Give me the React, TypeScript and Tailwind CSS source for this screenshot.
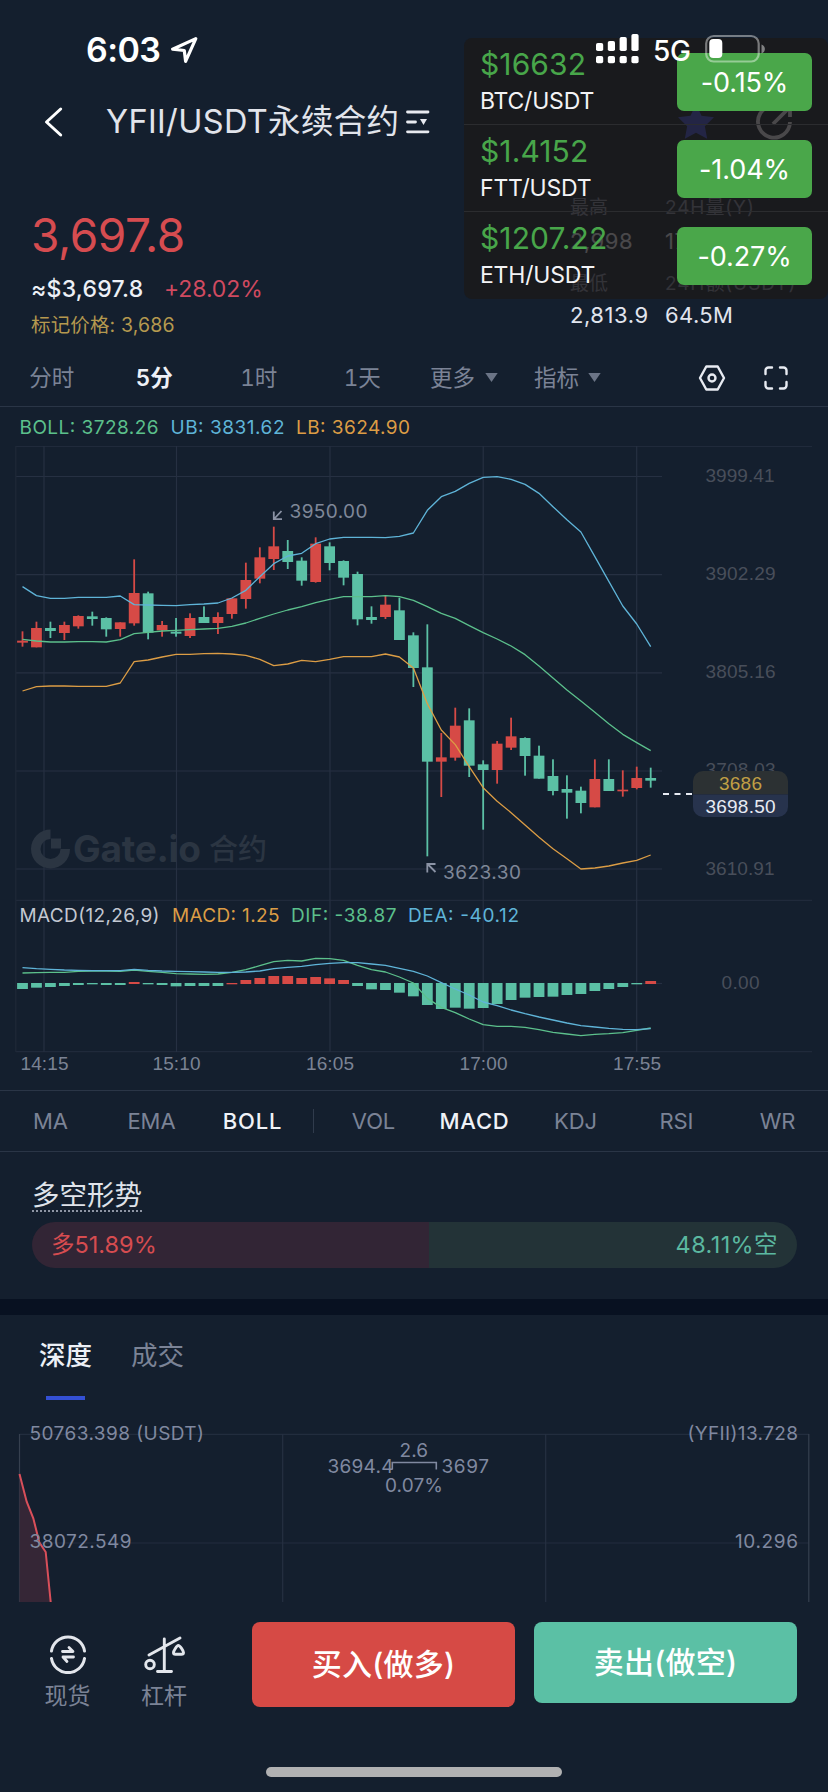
import React from "react";

type Dir = "r" | "g";
type Candle = [Dir, number, number, number, number];

const RED = "#d64a46";
const GREEN = "#5bc0a5";
const BLUE_LINE = "#5fb4d8";
const GREEN_LINE = "#5cc08c";
const ORANGE_LINE = "#dc9d45";
const GRID = "#263042";

const SANS = "Inter, 'Noto Sans CJK SC', sans-serif";
const AXIS = "'Liberation Sans', sans-serif";

// direction, high, body top, body bottom, low (one unit is a third of a pixel)
const candles: Candle[] = [
  ["r", 574, 602, 608, 620], ["r", 545, 564, 622, 622], ["g", 545, 564, 573, 594],
  ["r", 545, 555, 579, 600], ["r", 526, 528, 559, 566], ["g", 515, 529, 537, 557],
  ["g", 532, 534, 568, 590], ["r", 547, 547, 567, 590], ["r", 358, 459, 550, 557],
  ["g", 455, 460, 578, 598], ["r", 543, 555, 571, 590], ["g", 534, 575, 581, 590],
  ["r", 520, 534, 588, 594], ["g", 499, 531, 549, 549], ["r", 517, 531, 549, 582],
  ["r", 475, 475, 522, 536], ["r", 368, 420, 477, 506], ["r", 322, 352, 416, 430],
  ["r", 260, 319, 357, 390], ["g", 300, 333, 366, 387], ["g", 352, 362, 422, 437],
  ["r", 292, 311, 426, 428], ["g", 307, 319, 369, 391], ["g", 361, 363, 413, 436],
  ["g", 395, 402, 538, 556], ["g", 499, 531, 540, 551], ["r", 468, 494, 531, 537],
  ["g", 473, 511, 600, 600], ["g", 577, 586, 684, 741], ["g", 553, 682, 965, 1249],
  ["r", 879, 952, 965, 1071], ["r", 803, 857, 953, 962], ["g", 805, 841, 977, 1011],
  ["g", 961, 973, 990, 1169], ["r", 903, 911, 990, 1031], ["r", 833, 889, 923, 930],
  ["g", 892, 894, 948, 1007], ["g", 917, 947, 1016, 1016], ["g", 958, 1008, 1053, 1066],
  ["g", 1006, 1047, 1058, 1136], ["g", 1040, 1052, 1089, 1120], ["r", 958, 1017, 1102, 1102],
  ["g", 958, 1017, 1053, 1053], ["r", 991, 1049, 1054, 1070], ["r", 980, 1014, 1044, 1048],
  ["g", 983, 1014, 1022, 1043],
];

const upper = [440, 467, 475, 475, 472, 472, 472, 468, 494, 495, 496, 497, 494, 492, 489, 474, 451, 410, 371, 348, 340, 311, 297, 292, 292, 292, 293, 289, 279, 211, 170, 154, 130, 112, 110, 118, 133, 160, 200, 239, 276, 350, 424, 498, 552, 620];
const middle = [598, 603, 606, 606, 605, 605, 606, 599, 581, 577, 573, 571, 569, 567, 565, 559, 549, 535, 522, 510, 500, 488, 478, 470, 470, 470, 467, 470, 481, 500, 520, 535, 557, 578, 597, 618, 644, 678, 714, 750, 783, 817, 851, 883, 908, 932];
const lower = [753, 740, 738, 738, 739, 739, 739, 729, 665, 660, 651, 643, 643, 641, 640, 642, 646, 658, 677, 672, 661, 665, 658, 650, 650, 650, 642, 651, 684, 791, 870, 914, 980, 1043, 1084, 1118, 1155, 1192, 1226, 1256, 1287, 1284, 1278, 1269, 1261, 1245];

// MACD histogram: values under 280 rise above the zero line
const hist = [297, 293, 291, 288, 285, 283, 285, 285, 276, 283, 285, 289, 288, 288, 288, 279, 270, 264, 258, 258, 264, 261, 265, 270, 288, 298, 300, 308, 319, 345, 357, 353, 356, 354, 342, 330, 323, 321, 320, 315, 312, 303, 297, 291, 283, 273];
const dif = [249, 248, 247, 247, 244, 243, 243, 244, 240, 244, 247, 251, 252, 253, 252, 247, 239, 227, 215, 211, 213, 205, 206, 211, 226, 239, 246, 261, 279, 325, 352, 368, 387, 404, 409, 409, 412, 419, 427, 432, 437, 433, 431, 428, 421, 414];
const dea = [233, 236, 238, 240, 241, 242, 242, 242, 238, 241, 243, 244, 245, 246, 247, 247, 246, 243, 236, 232, 229, 224, 220, 218, 218, 222, 226, 235, 244, 258, 278, 297, 315, 336, 347, 360, 371, 381, 390, 399, 407, 411, 415, 418, 419, 416];

const cx = (i: number) => 22.5 + i * 13.96;
const priceY = (v: number) => 440 + v / 3;
const macdY = (v: number) => 890 + v / 3;
const line = (vals: number[], y: (v: number) => number) =>
  vals.map((v, i) => `${cx(i).toFixed(2)},${y(v).toFixed(2)}`).join(" ");

function Label({
  x, y, w, fill, size = 19, font = SANS, weight = 400, children,
}: {
  x: number; y: number; w: number; fill: string; size?: number; font?: string; weight?: number; children: string;
}) {
  return (
    <text x={x} y={y} textLength={w} fill={fill} fontSize={size} fontFamily={font} fontWeight={weight}>
      {children}
    </text>
  );
}

function PriceChart() {
  return (
    <svg className="block h-[683px] w-full shrink-0" viewBox="0 407 828 683">
      <g stroke={GRID} strokeWidth="1.2">
        <path d="M16 446.5H812M16 900.3H812M16 1051.7H812" stroke="#202a3b" />
        <path d="M16 476.5H662M16 574.7H662M16 672.8H662M16 771H662M16 869H662" />
        <path d="M15.8 446V1052" stroke="#1e2838" />
        <path d="M44 446V1052M176.5 446V1052M330 446V1052M483.2 446V1052M636.7 446V1052" />
        <path d="M640 983.5H662" />
      </g>

      <g fill="#2b3542">
        <path d="M50.5 829.5A19.5 19.5 0 1 0 70 849H60.5A10 10 0 1 1 50.5 839Z" />
        <path d="M51 838.5H61V848.5H51Z" />
        <Label x={73} y={861.7} w={128} fill="#2b3542" size={37} weight={650}>Gate.io</Label>
        <Label x={209} y={859.5} w={58} fill="#2b3542" size={29} weight={500}>合约</Label>
      </g>

      <Label x={19.5} y={433.5} w={139} fill={GREEN_LINE}>BOLL: 3728.26</Label>
      <Label x={170.5} y={433.5} w={114} fill={BLUE_LINE}>UB: 3831.62</Label>
      <Label x={296} y={433.5} w={114} fill={ORANGE_LINE}>LB: 3624.90</Label>

      {candles.map(([d, hi, top, bottom, lo], i) => (
        <g key={i} fill={d === "r" ? RED : GREEN}>
          <rect x={cx(i) - 0.9} y={priceY(hi)} width="1.8" height={(lo - hi) / 3} />
          <rect x={cx(i) - 5.4} y={priceY(top)} width="10.8" height={(bottom - top) / 3} />
        </g>
      ))}
      <g fill="none" strokeWidth="1.3" strokeLinejoin="round">
        <polyline points={line(upper, priceY)} stroke={BLUE_LINE} />
        <polyline points={line(middle, priceY)} stroke={GREEN_LINE} />
        <polyline points={line(lower, priceY)} stroke={ORANGE_LINE} />
      </g>

      <g fill="none" stroke="#8b93a5" strokeWidth="1.8">
        <path d="M281.5 511L274.5 518.5M273.8 511.5V519.2H282" />
        <path d="M435.5 872L428 864.5M427.3 872.5V864H435.5" />
      </g>
      <Label x={289.5} y={518} w={78} fill="#7f8798">3950.00</Label>
      <Label x={443} y={878.7} w={78} fill="#7f8798">3623.30</Label>

      <g>
        <Label x={705.5} y={482} w={69} fill="#484e5a" font={AXIS}>3999.41</Label>
        <Label x={705.5} y={580.2} w={70} fill="#484e5a" font={AXIS}>3902.29</Label>
        <Label x={705.5} y={678.3} w={70} fill="#484e5a" font={AXIS}>3805.16</Label>
        <Label x={705.5} y={776.3} w={70} fill="#484e5a" font={AXIS}>3708.03</Label>
        <Label x={705.5} y={874.5} w={69} fill="#484e5a" font={AXIS}>3610.91</Label>
        <Label x={721.5} y={989} w={38} fill="#484e5a" font={AXIS}>0.00</Label>
      </g>

      <path d="M663 794H692" stroke="#e8ebf3" strokeWidth="2" strokeDasharray="6 5.5" />
      <path d="M693 794.5V781A10 10 0 0 1 703 771H778A10 10 0 0 1 788 781V794.5Z" fill="#2c3133" />
      <path d="M693 794.5V807A10 10 0 0 0 703 817H778A10 10 0 0 0 788 807V794.5Z" fill="#27334d" />
      <Label x={719} y={789.7} w={43} fill="#c09f45" font={AXIS}>3686</Label>
      <Label x={705.5} y={813} w={70} fill="#e8ebf3" font={AXIS}>3698.50</Label>

      <Label x={19.5} y={922} w={140} fill="#c3c8d2">MACD(12,26,9)</Label>
      <Label x={172} y={922} w={107.5} fill={ORANGE_LINE}>MACD: 1.25</Label>
      <Label x={291} y={922} w={105.5} fill={GREEN_LINE}>DIF: -38.87</Label>
      <Label x={408} y={922} w={111} fill={BLUE_LINE}>DEA: -40.12</Label>

      {hist.map((v, i) => {
        const up = v < 280;
        const y0 = up ? macdY(v) : macdY(279);
        const y1 = up ? macdY(282) : macdY(v);
        return <rect key={i} x={cx(i) - 5.4} y={y0} width="10.8" height={Math.max(y1 - y0, 1.3)} fill={up ? RED : GREEN} />;
      })}
      <g fill="none" strokeWidth="1.3" strokeLinejoin="round">
        <polyline points={line(dif, macdY)} stroke={GREEN_LINE} />
        <polyline points={line(dea, macdY)} stroke={BLUE_LINE} />
      </g>

      <Label x={20.5} y={1070} w={48} fill="#7b8394" font={AXIS}>14:15</Label>
      <Label x={152.5} y={1070} w={48} fill="#7b8394" font={AXIS}>15:10</Label>
      <Label x={306} y={1070} w={48} fill="#7b8394" font={AXIS}>16:05</Label>
      <Label x={459.5} y={1070} w={48} fill="#7b8394" font={AXIS}>17:00</Label>
      <Label x={613} y={1070} w={48} fill="#7b8394" font={AXIS}>17:55</Label>
    </svg>
  );
}

function DepthChart() {
  return (
    <svg className="block h-[182px] w-full shrink-0" viewBox="0 1420 828 182">
      <g stroke={GRID} strokeWidth="1.2">
        <path d="M19.5 1434.3H809M19.5 1543H809" stroke="#222d3e" />
        <path d="M282.7 1434V1602M545.7 1434V1602" />
        <path d="M19.5 1434V1602M808.8 1434V1602" stroke="#36404f" />
      </g>
      <path d="M19.5 1474L26.7 1501.7L33.3 1518.3L39.3 1542.3L45.7 1552L50.7 1602H19.5Z" fill="#352636" />
      <path d="M19.5 1474L26.7 1501.7L33.3 1518.3L39.3 1542.3L45.7 1552L50.7 1602" fill="none" stroke="#d94f5a" strokeWidth="2" />
      <Label x={29.5} y={1440} w={174.5} fill="#8089a0">50763.398 (USDT)</Label>
      <Label x={29.5} y={1547.7} w={102} fill="#8089a0">38072.549</Label>
      <Label x={687.5} y={1440} w={110.5} fill="#8089a0">(YFII)13.728</Label>
      <Label x={735} y={1547.7} w={63} fill="#8089a0">10.296</Label>
      <Label x={399.5} y={1457} w={28.5} fill="#8089a0">2.6</Label>
      <Label x={327.5} y={1472.7} w={66} fill="#8089a0">3694.4</Label>
      <Label x={441.5} y={1472.7} w={47.5} fill="#8089a0">3697</Label>
      <Label x={385} y={1491.7} w={58} fill="#8089a0">0.07%</Label>
      <path d="M392.3 1469.5V1462.5H436.3V1469.5" fill="none" stroke="#8089a0" strokeWidth="1.6" />
    </svg>
  );
}

const tickers = [
  { price: "$16632", pair: "BTC/USDT", change: "-0.15%" },
  { price: "$1.4152", pair: "FTT/USDT", change: "-1.04%" },
  { price: "$1207.22", pair: "ETH/USDT", change: "-0.27%" },
];

function TickerOverlay() {
  return (
    <div className="absolute left-[464px] top-[38px] z-10 h-[261px] w-[364px] overflow-hidden rounded-[8px] bg-[rgba(27,25,25,0.77)]">
      {tickers.map((t, i) => (
        <div
          key={t.pair}
          className={`flex h-[87px] items-start justify-between pl-[16px] pr-[16px] ${i < 2 ? "border-b border-[#2b2c2f]" : ""}`}
        >
          <div className="flex flex-col whitespace-nowrap pt-[8px]">
            <span className="text-[30px] leading-[36px] tracking-[0.1px] text-[#48a64a]">{t.price}</span>
            <span className="mt-[4px] text-[23px] leading-[30px] tracking-[-0.2px] text-[#f3f3f5]">{t.pair}</span>
          </div>
          <div className="mt-[15px] flex h-[58px] w-[135px] items-center justify-center rounded-[7px] bg-[#4aa74a] pt-[2px] text-[27px] tracking-[-0.1px] text-white">
            {t.change}
          </div>
        </div>
      ))}
    </div>
  );
}

function StatusBar() {
  const bars = [8, 10, 14, 17];
  return (
    <div className="relative z-20 flex h-[86px] items-start text-white">
      <span className="ml-[86px] mt-[29px] w-[84px] text-[34px] font-semibold leading-[42px] tracking-[-0.6px]">6:03</span>
      <svg className="mt-[35px] h-[30px] w-[30px]" viewBox="0 0 30 30" fill="none" stroke="#fff" strokeWidth="3.2" strokeLinejoin="round">
        <path d="M25.8 3.6L2.6 14.2L14.3 15.5L15.6 26.4Z" />
      </svg>
      <svg className="ml-[396px] mt-[34px] h-[30px] w-[43px]" viewBox="0 0 43 30" fill="#fff">
        {bars.map((h, i) => (
          <g key={h}>
            <rect x={i * 11.8} y={17 - h} width="7.2" height={h} rx="1.8" />
            <rect x={i * 11.8} y="22" width="7.2" height="7.2" rx="1.8" />
          </g>
        ))}
      </svg>
      <span className="ml-[14px] mt-[34px] w-[52px] text-[28px] font-medium leading-[34px] tracking-[-0.4px]">5G</span>
      <svg className="mt-[34px] h-[30px] w-[62px]" viewBox="0 0 62 30">
        <rect x="1.2" y="2" width="52.5" height="25.5" rx="7.5" fill="none" stroke="#fff" strokeOpacity=".42" strokeWidth="2.2" />
        <rect x="4.3" y="5" width="13" height="19" rx="4" fill="#fff" />
        <path d="M56.5 10.5C61 12 61 18 56.5 19.5Z" fill="#fff" fillOpacity=".45" />
      </svg>
    </div>
  );
}

function Header() {
  return (
    <div className="flex h-[72px] items-center">
      <svg className="ml-[42px] h-[34px] w-[24px]" viewBox="0 0 24 34" fill="none" stroke="#fff" strokeWidth="3" strokeLinecap="round" strokeLinejoin="round">
        <path d="M18.7 4L4.5 17L18.7 30" />
      </svg>
      <h1 className="ml-[40px] w-[294px] whitespace-nowrap text-[32.5px] leading-[40px] tracking-[0.35px] text-[#e1e4eb]">YFII/USDT永续合约</h1>
      <svg className="ml-[5px] h-[26px] w-[26px]" viewBox="0 0 26 26" fill="none" stroke="#e8eaf0" strokeWidth="2.8" strokeLinecap="round">
        <path d="M2.5 3H23M2.5 13H10.5M2.5 22.8H23" />
        <path d="M15 10H22L18.5 16Z" fill="#e8eaf0" stroke="none" />
      </svg>
      <svg className="ml-[245px] h-[40px] w-[40px]" viewBox="0 0 24 24" fill="#3c50d8">
        <path d="M12 1.2l3.3 7 7.5 1-5.5 5.3 1.4 7.6L12 18.4l-6.7 3.7 1.4-7.6L1.2 9.2l7.5-1z" />
      </svg>
      <svg className="ml-[38px] h-[40px] w-[40px]" viewBox="0 0 40 40" fill="none" stroke="#e1e4eb" strokeWidth="3.8">
        <path d="M31 8A16 16 0 1 0 36 20M19 22L35 6M25 4.5H36V15" />
      </svg>
    </div>
  );
}

function Summary() {
  return (
    <div className="flex h-[190px] items-start justify-between">
      <div className="flex flex-col pl-[31px] pt-[50px]">
        <span className="text-[46px] leading-[54px] tracking-[-0.4px] text-[#d64c50]">3,697.8</span>
        <div className="mt-[12px] flex items-center gap-[19px] text-[23px] leading-[30px]">
          <span className="w-[114px] font-medium tracking-[0.25px] text-[#edf0f6]">≈$3,697.8</span>
          <span className="tracking-[-0.1px] text-[#d04a60]">+28.02%</span>
        </div>
        <span className="mt-[8px] text-[19.5px] leading-[26px] tracking-[0.15px] text-[#b5994f]">标记价格: 3,686</span>
      </div>
      <div className="grid w-[258px] grid-cols-[95px_1fr] whitespace-nowrap pt-[38px]">
        <span className="text-[19px] leading-[24px] text-[#8089a0]">最高</span>
        <span className="text-[19px] leading-[24px] tracking-[0.9px] text-[#8089a0]">24H量(Y)</span>
        <span className="mt-[8px] text-[22px] leading-[26px] tracking-[0.5px] text-[#e1e5ee]">2,998</span>
        <span className="mt-[8px] text-[22px] leading-[26px] tracking-[0.5px] text-[#e1e5ee]">17.9K</span>
        <span className="mt-[18px] text-[19px] leading-[24px] text-[#8089a0]">最低</span>
        <span className="mt-[18px] text-[19px] leading-[24px] tracking-[0.9px] text-[#8089a0]">24H额(USDT)</span>
        <span className="mt-[6px] text-[22px] leading-[26px] tracking-[0.55px] text-[#e1e5ee]">2,813.9</span>
        <span className="mt-[6px] text-[22px] leading-[26px] tracking-[0.4px] text-[#e1e5ee]">64.5M</span>
      </div>
    </div>
  );
}

function Triangle() {
  return (
    <svg className="h-[9px] w-[13px]" viewBox="0 0 13 9" fill="#6b7486">
      <path d="M0.3 0H12.7L6.5 9Z" />
    </svg>
  );
}

function RangeTabs() {
  return (
    <div className="flex h-[59px] items-center border-b border-[#2a3546] pt-px text-[22.5px] text-[#7b8396]">
      {["分时", "5分", "1时", "1天"].map((t) => (
        <span key={t} className={`w-[103.5px] text-center tabular-nums ${t === "5分" ? "pr-[2px] font-semibold text-[#edf0f6]" : ""}`}>{t}</span>
      ))}
      <div className="ml-[16px] flex w-[104px] items-center gap-[10px]">更多<Triangle /></div>
      <div className="flex w-[104px] items-center gap-[9px]">指标<Triangle /></div>
      <svg className="ml-[60px] h-[28px] w-[28px]" viewBox="0 0 28 28" fill="none" stroke="#e8ebf2" strokeWidth="2.4" strokeLinejoin="round">
        <path d="M8.3 2.5H19.7L26 14L19.7 25.5H8.3L2 14Z" />
        <circle cx="14" cy="14" r="3.5" />
      </svg>
      <svg className="ml-[37px] h-[26px] w-[26px]" viewBox="0 0 26 26" fill="none" stroke="#e8ebf2" strokeWidth="2.4" strokeLinecap="round">
        <path d="M2.5 9V5.5A3 3 0 0 1 5.5 2.5H9M17 2.5H20.5A3 3 0 0 1 23.5 5.5V9M23.5 17V20.5A3 3 0 0 1 20.5 23.5H17M9 23.5H5.5A3 3 0 0 1 2.5 20.5V17" />
      </svg>
    </div>
  );
}

function IndicatorTabs() {
  const cell = (t: string) => (
    <span
      key={t}
      className={`w-[101px] text-center ${t === "BOLL" || t === "MACD" ? "font-medium tracking-[0.8px] text-[#f0f2f7]" : "tracking-[-0.1px]"}`}
    >
      {t}
    </span>
  );
  return (
    <div className="flex h-[62px] items-center border-y border-[#2a3546] text-[22px] text-[#7b8396]">
      {["MA", "EMA", "BOLL"].map(cell)}
      <div className="flex w-[20px] justify-center">
        <div className="h-[24px] w-px bg-[#303b4c]" />
      </div>
      {["VOL", "MACD", "KDJ", "RSI", "WR"].map(cell)}
    </div>
  );
}

function Sentiment() {
  return (
    <div className="h-[147px] px-[32px] pt-[27px]">
      <span className="inline-block h-[33px] border-b-2 border-dotted border-[#8f96a4] text-[27.5px] leading-[32px] text-[#dfe3ea]">多空形势</span>
      <div className="mt-[10px] flex h-[46px] w-[765px] overflow-hidden rounded-full text-[23.5px] leading-[46px]">
        <div className="w-[51.89%] bg-[#322535] pl-[19px] text-[#d64c50]">多51.89%</div>
        <div className="flex-1 bg-[#233337] pr-[19px] text-right tracking-[0.4px] text-[#5bb8a0]">48.11%空</div>
      </div>
    </div>
  );
}

function DepthTabs() {
  return (
    <div className="flex h-[105px] gap-[39px] pl-[39px] pt-[22px] text-[26.5px] leading-[36px]">
      <div className="flex flex-col items-center">
        <span className="font-medium text-[#edf0f6]">深度</span>
        <div className="mt-[23px] h-[4px] w-[39px] bg-[#3450d4]" />
      </div>
      <span className="text-[#7b8396]">成交</span>
    </div>
  );
}

function TradeBar() {
  return (
    <div className="flex items-start pt-[20px]">
      <div className="ml-[40px] flex w-[56px] flex-col items-center pt-[12px]">
        <svg className="h-[40px] w-[40px]" viewBox="0 0 40 40" fill="none" stroke="#e3e6ec" strokeWidth="3" strokeLinecap="round">
          <path d="M3.5 17A16.7 16.7 0 0 1 36.5 17M3.5 24.5A16.7 16.7 0 0 0 36.5 24.5" />
          <path d="M14.5 17.5H25L21 13.5M25.5 23H15L19 27.5" strokeWidth="2.8" strokeLinejoin="round" />
        </svg>
        <span className="mt-[7px] pr-px text-[23px] leading-[30px] text-[#7b8396]">现货</span>
      </div>
      <div className="ml-[40px] flex w-[56px] flex-col items-center pt-[12px]">
        <svg className="h-[40px] w-[44px]" viewBox="0 0 44 40" fill="none" stroke="#e3e6ec" strokeWidth="2.9" strokeLinecap="round" strokeLinejoin="round">
          <path d="M22.3 5V37.5M15.5 37.5H29.5M7 21L38 4" />
          <circle cx="8" cy="30.5" r="4.3" />
          <path d="M36.3 11.5C38 11.5 41.5 17 41.5 18.5C41.5 20 40.5 20.3 39.5 20.3H33.5C32.3 20.3 31.5 20 31.5 18.5C31.5 17 34.8 11.5 36.3 11.5Z" />
        </svg>
        <span className="mt-[7px] text-[23px] leading-[30px] text-[#7b8396]">杠杆</span>
      </div>
      <button className="ml-[60px] h-[85px] w-[263px] rounded-[8px] bg-[#d64a45] text-[30px] font-medium leading-[85px] tracking-[0.2px] text-white">买入(做多)</button>
      <button className="ml-[19px] h-[81px] w-[263px] rounded-[8px] bg-[#5bc0a5] text-[30px] font-medium leading-[81px] tracking-[0.2px] text-white">卖出(做空)</button>
    </div>
  );
}

export default function App() {
  return (
    <div className="relative flex h-[1792px] w-[828px] flex-col overflow-hidden bg-[#141f2e] font-[Inter,'Noto_Sans_CJK_SC',sans-serif]">
      <StatusBar />
      <Header />
      <Summary />
      <RangeTabs />
      <PriceChart />
      <IndicatorTabs />
      <Sentiment />
      <div className="h-[16px] shrink-0 bg-[#081121]" />
      <DepthTabs />
      <DepthChart />
      <TradeBar />
      <div className="mt-auto flex justify-center pb-[15px]">
        <div className="h-[10px] w-[296px] rounded-full bg-[#b1b1b2]" />
      </div>
      <TickerOverlay />
    </div>
  );
}
